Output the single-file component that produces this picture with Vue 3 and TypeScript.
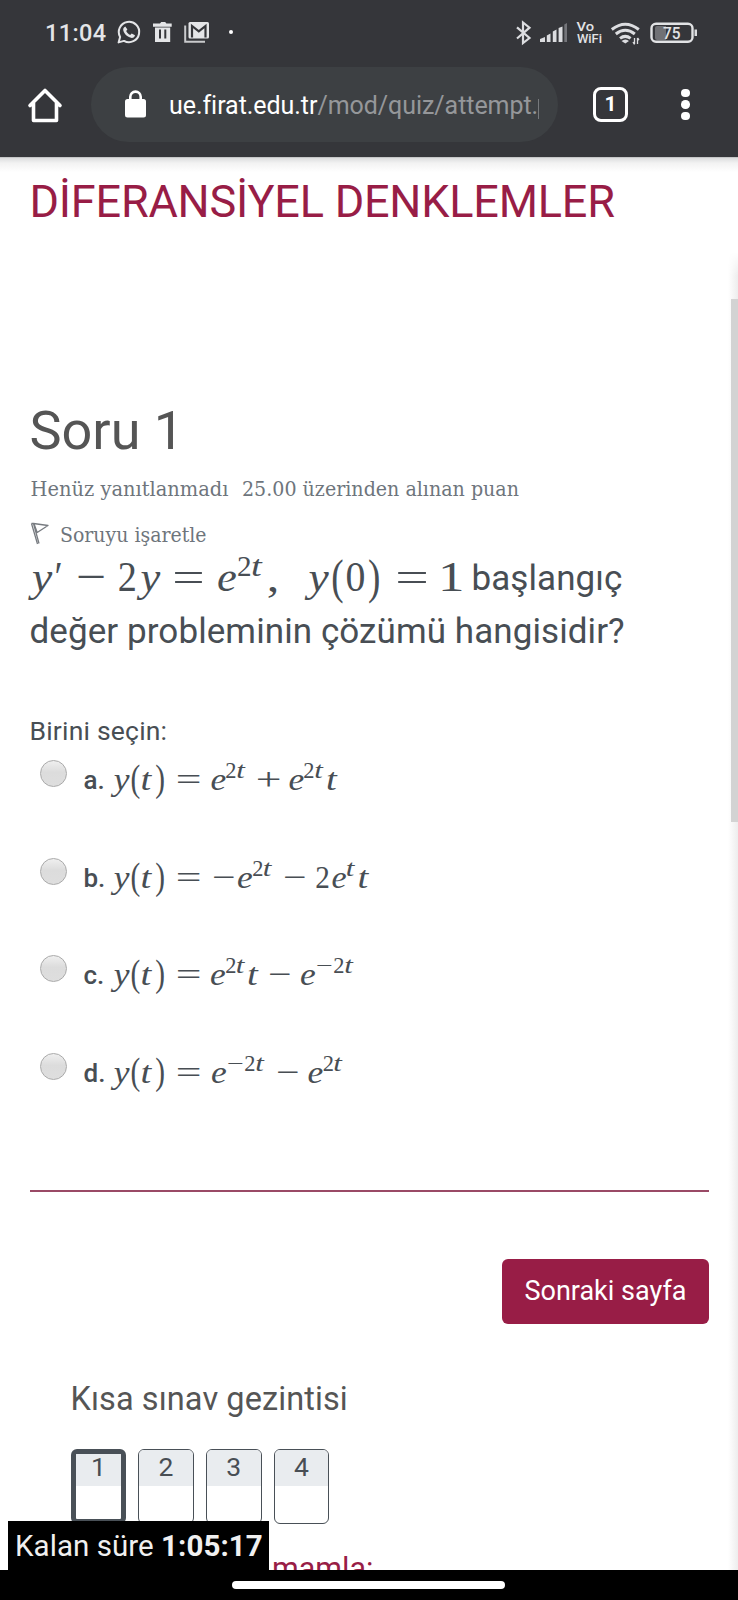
<script setup lang="ts">
type Glyph = [char: string, x: number, width: number, kind?: 'sup']

interface Choice {
  letter: string
  glyphs: Glyph[]
}

// Ink box of each math glyph as [left, right] fractions of the font size.
const ink: Record<string, [number, number]> = {
  y: [-0.024, 0.426],
  e: [0.031, 0.412],
  t: [0.037, 0.296],
  '2': [0.03, 0.475],
  '0': [0.024, 0.476],
  '1': [0.111, 0.394],
  '(': [0.048, 0.304],
  ')': [0.029, 0.285],
  '=': [0.03, 0.534],
  '−': [0.03, 0.534],
  '+': [0.03, 0.534],
  ',': [0.056, 0.195],
  '′': [0.04, 0.2],
}

function glyphAttrs(g: Glyph, size: number, base: number, rise: number) {
  const [char, x, width, kind] = g
  let fs = kind === 'sup' ? size * 0.71 : size
  let y = kind === 'sup' ? base - rise : base
  if (char === '(' || char === ')') {
    fs *= 1.16
    y += size * 0.04
  }
  const [l, r] = ink[char] ?? [0, 0.5]
  const sx = width / ((r - l) * fs)
  return {
    transform: `translate(${x} ${y}) scale(${sx.toFixed(4)} 1)`,
    x: (-l * fs).toFixed(2),
    'font-size': fs,
    class: /[yet]/.test(char) ? 'it' : 'up',
  }
}

const question: Glyph[] = [
  ['y', 1, 20.5], ['′', 26, 6], ['−', 47.5, 27], ['2', 89, 17], ['y', 109.5, 20],
  ['=', 144, 29], ['e', 188.5, 17], ['2', 208, 13, 'sup'], ['t', 222.5, 10, 'sup'], [',', 239.5, 7],
  ['y', 277.5, 20.5], ['(', 303, 9.5], ['0', 316.5, 18], [')', 339, 9.5], ['=', 367, 30], ['1', 414, 15],
]

const head: Glyph[] = [
  ['y', 3, 16], ['(', 22, 7.5], ['t', 32, 10], [')', 46, 7.5], ['=', 67, 23],
]

const choices: Choice[] = [
  { letter: 'a.', glyphs: [...head, ['e', 101.5, 13.5], ['2', 116, 10, 'sup'], ['t', 127.5, 8, 'sup'], ['+', 147, 23], ['e', 179.5, 13.5], ['2', 194, 10, 'sup'], ['t', 205.500, 8, 'sup'], ['t', 217.500, 10]] },
  { letter: 'b.', glyphs: [...head, ['−', 103, 21], ['e', 128, 13.5], ['2', 143, 10, 'sup'], ['t', 154, 8, 'sup'], ['−', 174, 21], ['2', 206, 13], ['e', 222.500, 13], ['t', 237, 8, 'sup'], ['t', 249, 10]] },
  { letter: 'c.', glyphs: [...head, ['e', 101, 13.5], ['2', 116, 10, 'sup'], ['t', 127, 8, 'sup'], ['t', 138.5, 10], ['−', 159, 21], ['e', 191, 13.5], ['−', 207, 15, 'sup'], ['2', 224, 10, 'sup'], ['t', 235.5, 8, 'sup']] },
  { letter: 'd.', glyphs: [...head, ['e', 102, 13.5], ['−', 118, 15, 'sup'], ['2', 135, 10, 'sup'], ['t', 146.5, 8, 'sup'], ['−', 167, 21], ['e', 198.5, 13.5], ['2', 213.5, 10, 'sup'], ['t', 224.5, 8, 'sup']] },
]

const pages = [1, 2, 3, 4]
</script>

<template>
  <div class="screen">
    <header class="chrome">
      <div class="status">
        <span class="clock">11:04</span>
        <svg class="ic-left" width="104" height="28" viewBox="114 18 104 28">
          <path d="M118.600 42.400l1.500-5.400a10.200 10.200 0 1 1 3.900 3.900z" fill="none" stroke="#e4e5e7" stroke-width="2" stroke-linejoin="round" />
          <path d="M125.300 26.600c-1.500.700-2.500 2-2 4 1.200 3.800 4.500 7 8.500 7.300 1.700 0 3-1 3.200-2.600l-3.300-1.800-1.500 1.500c-1.900-.8-3.200-2.200-4-3.900l1.200-1.500z" fill="#e4e5e7" />
          <path d="M153 23.500h7l1.200-1.500h4l1.200 1.500h5.300v3.200H153zM155 27.500h15.200v14.500H155z" fill="#e4e5e7" />
          <path d="M160 29.500v9M165.300 29.500v9" stroke="#35363a" stroke-width="2" />
          <path d="M185.200 25.500v16.200H205" fill="none" stroke="#c9cacc" stroke-width="2" />
          <rect x="188.500" y="22" width="20.500" height="16.500" rx="1.500" fill="#e4e5e7" />
          <path d="M192 37.500V26l6.800 5.300L205.500 26v11.500" fill="none" stroke="#35363a" stroke-width="2.200" />
        </svg>
        <i class="more"></i>
        <svg class="ic-right" width="186" height="30" viewBox="514 18 186 30">
          <path d="M517 27.300l12.500 10.700-6.500 5V22.500l6.500 5.200L517 38.500" fill="none" stroke="#dcdde0" stroke-width="2.200" />
          <path d="M540 42v-3l5-2v5zM546.800 42v-6.500l3.700-2V42zM552.800 42V31.500l3.700-2V42zM558.600 42V28l3.900-1.500V42z" fill="#dcdde0" />
          <path d="M564.300 42V24.500l2.700-1.500v19z" fill="#74757a" />
          <text x="576.500" y="31" font-size="12.500" textLength="17.500" lengthAdjust="spacingAndGlyphs" class="tiny">Vo</text>
          <text x="577" y="43" font-size="12.500" textLength="25" lengthAdjust="spacingAndGlyphs" class="tiny">WiFi</text>
          <g fill="none" stroke="#dcdde0" stroke-width="3">
            <path d="M611.800 29.500q13.500-10.500 27 0" />
            <path d="M615.800 34q9.500-7.500 19 0" />
            <path d="M620 38.400q5.300-4 10.600 0" />
          </g>
          <path d="M621.500 41q4-3 7.500 0l-3.700 2.600z" fill="#dcdde0" />
          <path d="M634.500 38v6M637.500 38v6M633 42l1.500 2.500M639 40l-1.500-2" stroke="#dcdde0" stroke-width="1.300" fill="none" />
          <rect x="651.500" y="23.800" width="41" height="18" rx="4.500" fill="none" stroke="#e2e3e5" stroke-width="2.400" />
          <path d="M655 28a2 2 0 0 1 2-2h9v14h-9a2 2 0 0 1-2-2z" fill="#707175" />
          <rect x="694.500" y="29.500" width="2.500" height="6.500" fill="#dcdde0" />
          <text x="663" y="39" font-size="16" textLength="17.500" lengthAdjust="spacingAndGlyphs" class="tiny">75</text>
        </svg>
      </div>
      <div class="toolbar">
        <svg class="home" width="38" height="38" viewBox="26 86 38 38">
          <path d="M30 105.500L45 90.500l15 15M33.500 103v17.500h23V103" fill="none" stroke="#fff" stroke-width="3.600" stroke-linejoin="round" stroke-linecap="round" />
        </svg>
        <div class="omnibox">
          <svg class="lock" width="22" height="28" viewBox="0 0 22 28">
            <rect x="0" y="9" width="21" height="18.500" rx="2.500" fill="#fff" />
            <path d="M5.300 10V6.800a5.200 5.200 0 0 1 10.400 0V10" fill="none" stroke="#fff" stroke-width="2.600" />
          </svg>
          <span class="url">ue.firat.edu.tr<em>/mod/quiz/attempt.</em></span>
          <i class="cut"></i>
        </div>
        <span class="tabs">1</span>
        <span class="kebab"><i></i><i></i><i></i></span>
      </div>
    </header>

    <main class="page">
      <h1>DİFERANSİYEL DENKLEMLER</h1>
      <h2>Soru 1</h2>
      <svg class="meta" width="500" height="30" viewBox="0 0 500 30">
        <text x="0.500" y="22.500" textLength="198" lengthAdjust="spacingAndGlyphs">Henüz yanıtlanmadı</text>
        <text x="212" y="22.500" textLength="277" lengthAdjust="spacingAndGlyphs">25.00 üzerinden alınan puan</text>
      </svg>
      <svg class="meta flag" width="200" height="30" viewBox="0 0 200 30">
        <path d="M1.500 4.500L7.500 25M3.500 4.500L9 24.500M1.500 4.500h2L18 6.500 7.200 13.500 4 4.800" />
        <text x="30" y="22.500" textLength="146.500" lengthAdjust="spacingAndGlyphs">Soruyu işaretle</text>
      </svg>

      <div class="question">
        <div class="line">
          <svg class="math" width="442" height="52" viewBox="0 0 442 52">
            <text v-for="(g, i) in question" :key="i" v-bind="glyphAttrs(g, 42.500, 38, 15.500)">{{ g[0] }}</text>
          </svg>
          <span class="q1">başlangıç</span>
        </div>
        <div class="line q2">değer probleminin çözümü hangisidir?</div>
      </div>

      <p class="prompt">Birini seçin:</p>
      <ul class="choices">
        <li v-for="c in choices" :key="c.letter">
          <i class="radio"></i>
          <b>{{ c.letter }}</b>
          <svg class="math" width="280" height="58" viewBox="0 0 280 58">
            <text v-for="(g, i) in c.glyphs" :key="i" v-bind="glyphAttrs(g, 32, 38.500, 12)">{{ g[0] }}</text>
          </svg>
        </li>
      </ul>

      <div class="rule"></div>
      <div class="actions"><button type="button">Sonraki sayfa</button></div>

      <section class="nav">
        <h3>Kısa sınav gezintisi</h3>
        <div class="tiles">
          <span v-for="n in pages" :key="n" class="tile" :class="{ current: n === 1 }"><span>{{ n }}</span></span>
        </div>
        <span class="link">mamla:</span>
      </section>
      <i class="edge"></i>
      <i class="thumb"></i>
    </main>

    <div class="timer">Kalan süre <b>1:05:17</b></div>
    <footer class="gesture"><i></i></footer>
  </div>
</template>

<style>
body {
  background: #fff;
}
</style>

<style scoped>
.screen {
  position: relative;
  width: 738px;
  height: 1600px;
  overflow: hidden;
  display: flex;
  flex-direction: column;
  background: #fff;
  color: #484e54;
  font-family: Roboto, "Liberation Sans", sans-serif;
}
h1, h2, h3, p, ul {
  margin: 0;
  padding: 0;
  font-weight: 400;
}
svg {
  display: block;
  flex: none;
}
.chrome {
  height: 157px;
  flex: none;
  background: #35363a;
}
.status {
  height: 66px;
  display: flex;
  align-items: flex-start;
}
.clock {
  width: 69px;
  margin-left: 45px;
  padding-top: 18px;
  line-height: 30px;
  font-size: 23.500px;
  font-weight: 500;
  letter-spacing: 0.400px;
  color: #e4e5e7;
}
.ic-left {
  margin-top: 18px;
}
.more {
  width: 4px;
  height: 4px;
  margin: 30px 0 0 11px;
  border-radius: 50%;
  background: #fff;
}
.ic-right {
  margin: 18px 0 0 281px;
}
.tiny {
  fill: #e2e3e5;
  font-weight: 500;
}
.toolbar {
  display: flex;
  align-items: center;
  height: 77px;
}
.home {
  margin-left: 26px;
}
.omnibox {
  display: flex;
  align-items: center;
  width: 467px;
  height: 75px;
  margin-left: 27px;
  padding-left: 34px;
  box-sizing: border-box;
  border-radius: 38px;
  background: #3d4043;
}
.lock {
  margin-bottom: 1px;
}
.url {
  margin-left: 22px;
  padding-top: 3px;
  font-size: 25px;
  letter-spacing: -0.050px;
  line-height: 36px;
  color: #fff;
  white-space: nowrap;
}
.url em {
  font-style: normal;
  color: #95979a;
}
.cut {
  width: 1px;
  height: 20px;
  margin: 8px 0 0;
  background: #77797c;
}
.tabs {
  width: 35px;
  height: 35px;
  margin: 0 0 0 35px;
  box-sizing: border-box;
  border: 3.500px solid #fff;
  border-radius: 8px;
  color: #fff;
  font-size: 21px;
  font-weight: 700;
  line-height: 29px;
  text-align: center;
}
.kebab {
  display: flex;
  flex-direction: column;
  gap: 3px;
  margin: 0 0 0 53px;
}
.kebab i {
  width: 8.500px;
  height: 8.500px;
  border-radius: 50%;
  background: #fff;
}
.page {
  position: relative;
  flex: 1;
  padding: 18px 29px 0 29.500px;
  background: linear-gradient(#b9babb 0, #dedfe0 1.500px, #f2f2f2 6px, #fff 15px);
}
h1 {
  height: 54px;
  line-height: 54px;
  font-size: 45px;
  letter-spacing: -0.200px;
  color: #981d46;
  white-space: nowrap;
}
h2 {
  margin-top: 169px;
  line-height: 66px;
  font-size: 54px;
  color: #555;
}
.meta {
  margin-top: 8.500px;
}
.meta text {
  font-family: "DejaVu Serif Condensed", "DejaVu Serif", serif;
  font-stretch: condensed;
  font-size: 20px;
  fill: #6e757c;
}
.meta path {
  fill: none;
  stroke: #777b80;
  stroke-width: 1.300px;
  stroke-linejoin: round;
}
.meta.flag {
  margin-top: 16.500px;
}
.question {
  margin-top: 4px;
  font-size: 35px;
  letter-spacing: 0.080px;
  line-height: 52.500px;
  white-space: nowrap;
}
.line {
  display: flex;
  height: 52.500px;
}
.math {
  overflow: visible;
}
.math text {
  fill: #484e54;
  font-family: "Liberation Serif", serif;
  letter-spacing: 0;
}
.math .it {
  font-style: italic;
}
.prompt {
  margin-top: 53px;
  line-height: 40px;
  font-size: 26.500px;
  letter-spacing: 0.200px;
}
.choices {
  list-style: none;
}
.choices li {
  display: flex;
  height: 97.700px;
}
.radio {
  width: 27px;
  height: 27px;
  margin: 9px 17px 0 10px;
  box-sizing: border-box;
  flex: none;
  border: 1px solid #aaa;
  border-radius: 50%;
  background: linear-gradient(#efefef, #dcdcdc 45%, #dedede);
}
.choices b {
  width: 26px;
  flex: none;
  line-height: 58px;
  font-size: 26px;
  font-weight: 500;
}
.rule {
  height: 2px;
  margin-top: 48px;
  background: #9a4a66;
}
.actions {
  display: flex;
  justify-content: flex-end;
  margin-top: 67.500px;
}
button {
  width: 207px;
  height: 65px;
  padding: 0;
  border: 0;
  border-radius: 6px;
  background: #981d46;
  color: #fff;
  font: 400 27px/65px Roboto, "Liberation Sans", sans-serif;
}
.nav {
  padding: 55px 0 0 41px;
}
h3 {
  line-height: 40px;
  font-size: 32.500px;
  letter-spacing: 0.080px;
  color: #555;
}
.tiles {
  display: flex;
  gap: 12px;
  margin-top: 30px;
}
.tile {
  width: 55.700px;
  height: 75px;
  box-sizing: border-box;
  overflow: hidden;
  border: 1.500px solid #495057;
  border-radius: 6px;
  background: #fff;
  font-size: 26.500px;
  text-align: center;
}
.tile span {
  display: block;
  height: 36px;
  line-height: 33px;
  background: #e9ecef;
}
.tile.current {
  border-width: 5.500px;
}
.tile.current span {
  height: 32px;
  line-height: 25px;
}
.link {
  display: block;
  margin: 25px 0 0 201.500px;
  font-size: 30.500px;
  line-height: 40px;
  color: #981d46;
}
.edge {
  position: absolute;
  top: 95px;
  right: 0;
  bottom: 0;
  width: 10px;
  background: linear-gradient(to right, #fff, #ededed);
  mask-image: linear-gradient(transparent, #000 24px);
}
.thumb {
  position: absolute;
  top: 142px;
  right: 0;
  width: 7px;
  height: 523px;
  background: #d3d3d3;
}
.timer {
  position: absolute;
  left: 8px;
  top: 1521px;
  width: 261px;
  height: 60px;
  padding-left: 7px;
  box-sizing: border-box;
  background: #000;
  color: #f0f0f0;
  font-size: 29.500px;
  letter-spacing: 0.050px;
  line-height: 50px;
  white-space: nowrap;
}
.gesture {
  position: absolute;
  left: 0;
  right: 0;
  bottom: 0;
  height: 30px;
  display: flex;
  justify-content: center;
  background: #000;
}
.gesture i {
  width: 273px;
  height: 8px;
  margin: 11px 1px 0 0;
  border-radius: 4px;
  background: #fff;
}
</style>
